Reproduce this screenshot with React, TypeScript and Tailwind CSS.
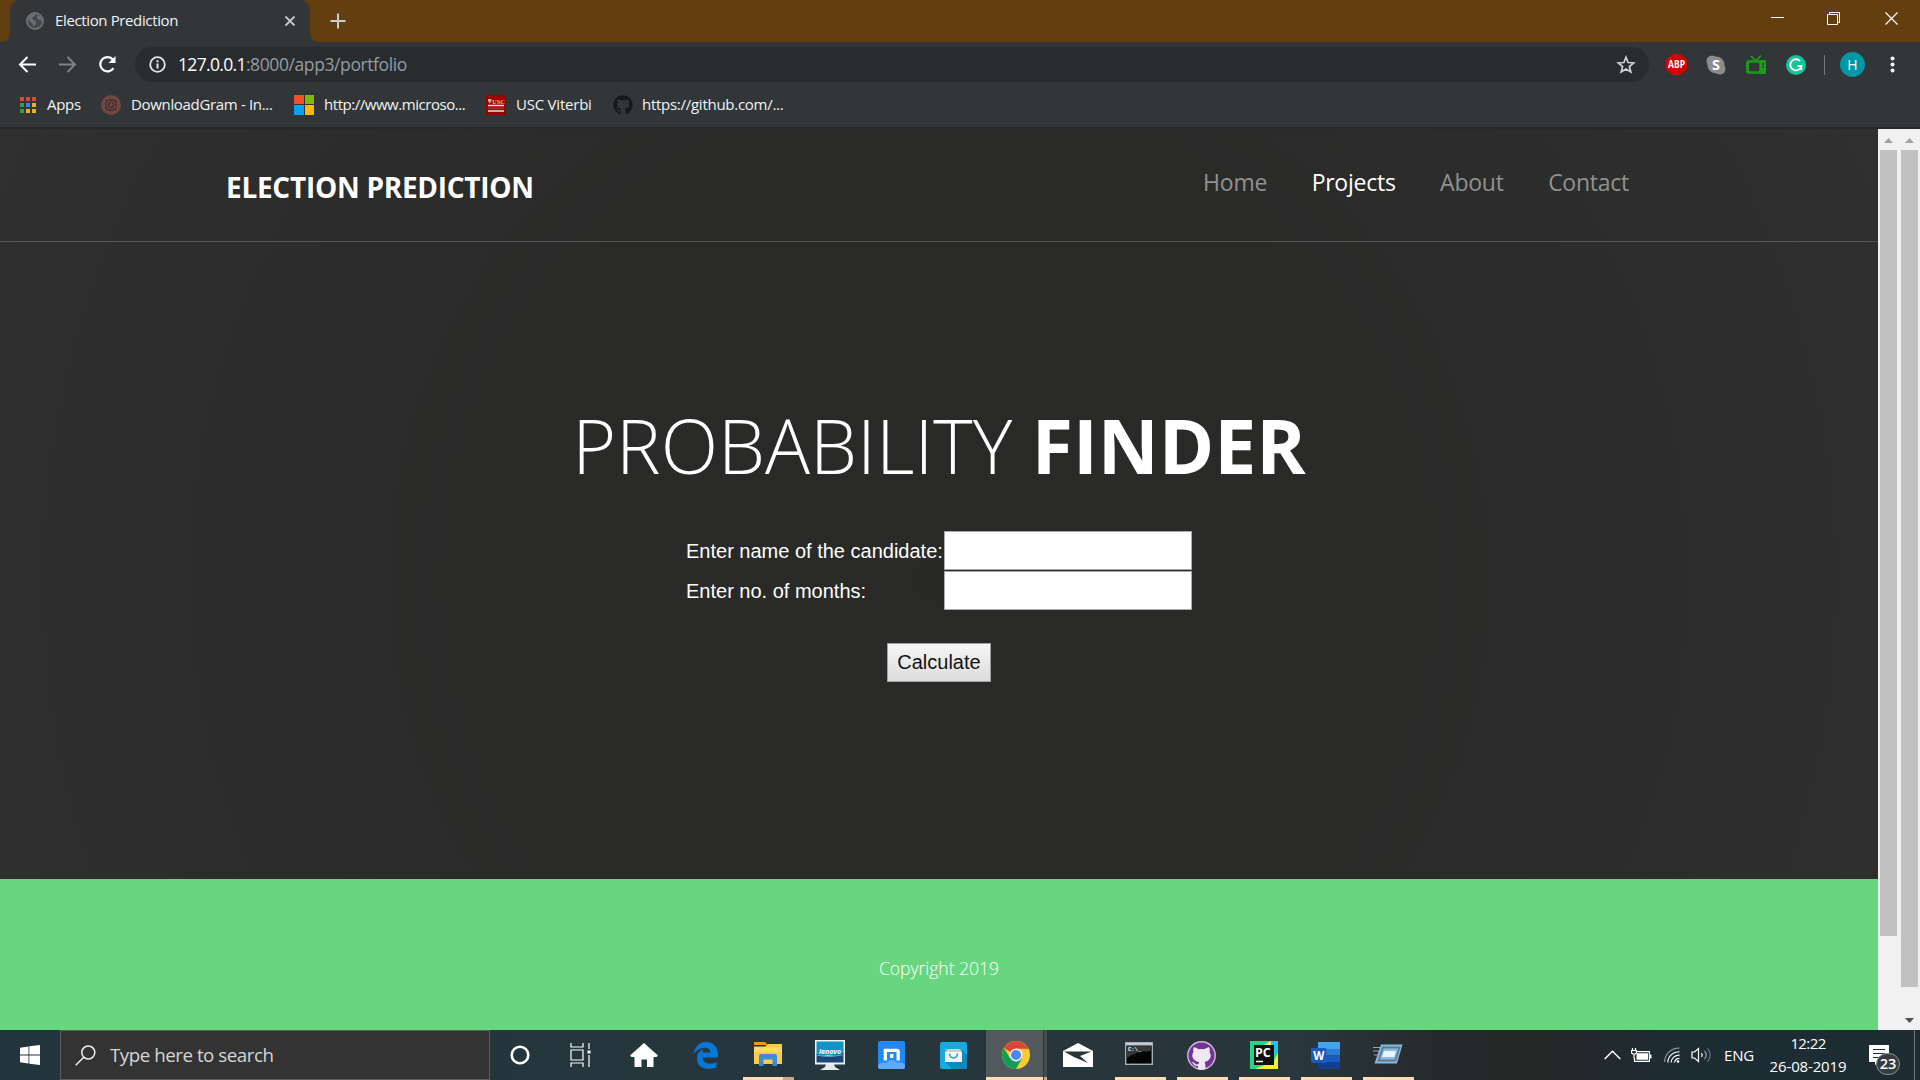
import React from "react";
import { FaGithub } from "react-icons/fa";

const TabBar = () => (
  <div className="flex h-[42px] bg-[#633f10]">
    <svg width="10" height="42" className="self-end"><path d="M0 42 Q10 42 10 32 V42 Z" fill="#323639" /></svg>
    <div className="flex h-[42px] w-[300px] items-center rounded-t-[10px] bg-[#323639] pr-[14px] pl-[16px]">
      <svg width="18" height="18" viewBox="0 0 18 18">
        <circle cx="9" cy="9" r="8" fill="#44484c" stroke="#6b6f73" strokeWidth="2" />
        <path d="M2 5 Q5 2 10 2 Q9 5 6 5 L7 8 L10 9 Q10 12 8 15 Q7 12 6 11 Q3 10 2 5Z M11 3 L15 5 L16 9 L13 8 L11 6Z" fill="#6b6f73" />
      </svg>
      <span className="mb-[2px] ml-[11px] text-[15px] leading-5 tracking-[-0.37px] whitespace-nowrap text-[#f1f3f4]">Election Prediction</span>
      <svg className="ml-auto" width="12" height="12" viewBox="0 0 12 12"><path d="M1.5 1.5 L10.5 10.5 M10.5 1.5 L1.5 10.5" stroke="#c4c7c9" strokeWidth="1.8" /></svg>
    </div>
    <svg width="10" height="42"><path d="M0 32 Q0 42 10 42 H0 Z" fill="#323639" /></svg>
    <svg className="mt-[13px] ml-[9.5px]" width="16" height="16" viewBox="0 0 16 16"><path d="M8 .5 V15.5 M.5 8 H15.5" stroke="#cbcdd0" strokeWidth="2" /></svg>
    <div className="mt-[11px] mr-[22px] ml-auto flex">
      <svg width="13" height="15" viewBox="0 0 13 15"><path d="M0 6.5 H13" stroke="#fff" /></svg>
      <svg className="ml-[43px]" width="13" height="15" viewBox="0 0 13 15" fill="none" stroke="#fff"><path d="M.5 3.500 H10.500 V13.500 H.5Z M2.500 3.500 V1.500 H12.500 V11.500 H10.500" /></svg>
      <svg className="ml-[45px]" width="13" height="15" viewBox="0 0 13 15"><path d="M.5 1.500 L12.500 13.500 M12.500 1.500 L.5 13.500" stroke="#fff" strokeWidth="1.200" /></svg>
    </div>
  </div>
);

const AddressBar = () => (
  <div className="flex h-[45px] items-center bg-[#323639]">
    <svg className="ml-[18px]" width="19" height="19" viewBox="0 0 19 19" fill="none" stroke="#fff" strokeWidth="2"><path d="M18 9.500 H2.500 M9.500 2 L2 9.500 L9.500 17" /></svg>
    <svg className="ml-[22px]" width="18" height="19" viewBox="0 0 18 19" fill="none" stroke="#7f8386" strokeWidth="2"><path d="M0 9.500 H16 M8.500 2 L16 9.500 L8.500 17" /></svg>
    <svg className="ml-[21px]" width="19" height="19" viewBox="0 0 19 19"><path d="M15.500 13.200 A7.200 7.200 0 1 1 14.600 4.200" fill="none" stroke="#fff" strokeWidth="2.200" /><path d="M17.500 1 V8 H10.500Z" fill="#fff" /></svg>
    <div className="ml-[18px] flex h-[35px] w-[1514px] items-center rounded-full bg-[#282c2f] pl-[14px]">
      <svg width="17" height="17" viewBox="0 0 17 17"><circle cx="8.500" cy="8.500" r="7.300" fill="none" stroke="#e3e5e7" strokeWidth="1.800" /><path d="M7.500 7.500 H9.500 V12.500 H7.500Z M7.500 4.300 H9.500 V6.200 H7.500Z" fill="#e3e5e7" /></svg>
      <div className="mb-px ml-[12px] flex text-[17.5px] leading-6 whitespace-nowrap">
        <span className="tracking-[-0.66px] text-white">127.0.0.1</span>
        <span className="tracking-[-0.4px] text-[#969ba0]">:8000/app3/portfolio</span>
      </div>
      <svg className="mr-[13px] ml-auto" width="20" height="20" viewBox="0 0 20 20"><path d="M10 2.200 L12.100 7.500 L17.700 7.900 L13.400 11.500 L14.800 17 L10 14 L5.200 17 L6.600 11.500 L2.300 7.900 L7.900 7.500Z" fill="none" stroke="#ced0d3" strokeWidth="1.700" /></svg>
    </div>
    <svg className="ml-[17px]" width="21" height="21" viewBox="0 0 21 21"><path d="M6 0 H15 L21 6 V15 L15 21 H6 L0 15 V6Z" fill="#cf0404" /><text x="10.500" y="14.300" textAnchor="middle" fontSize="10.500" fontWeight="700" fill="#fff" textLength="17" lengthAdjust="spacingAndGlyphs">ABP</text></svg>
    <svg className="ml-[19px]" width="20" height="20" viewBox="0 0 20 20"><circle cx="6" cy="6" r="5.500" fill="#8c8c8c" /><circle cx="14" cy="14" r="5.500" fill="#8c8c8c" /><circle cx="10" cy="10" r="8.500" fill="#8c8c8c" /><text x="10" y="15" textAnchor="middle" fontSize="14.500" fontWeight="700" fill="#fff">S</text></svg>
    <svg className="ml-[20px]" width="20" height="20" viewBox="0 0 20 20" fill="none" stroke="#1aa01a" strokeWidth="1.700"><path d="M5 1 L10 6 L15 .5" /><rect x="1" y="6" width="18" height="12" rx="1.500" /><path d="M15 6 V18 H19 V6Z" fill="#1aa01a" /><rect x="2.200" y="7" width="12" height="10" rx="2" /><path d="M16 9 H18 M16 12 H18" stroke="#323639" /></svg>
    <svg className="ml-[20px]" width="20" height="20" viewBox="0 0 20 20"><circle cx="10" cy="10" r="10" fill="#15c39a" /><path d="M14 6 A5.600 5.600 0 1 0 15.400 11 H11.500 M15.300 10.500 V15" fill="none" stroke="#fff" strokeWidth="1.800" /></svg>
    <div className="ml-[18px] h-5 w-px bg-[#73777a]" />
    <div className="ml-[15px] flex h-[25px] w-[25px] items-center justify-center rounded-full bg-[#0097a7] text-[14px] leading-none text-white">H</div>
    <svg className="ml-[25px]" width="5" height="17" viewBox="0 0 5 17" fill="#fff"><circle cx="2.500" cy="2.500" r="2" /><circle cx="2.500" cy="8.500" r="2" /><circle cx="2.500" cy="14.500" r="2" /></svg>
  </div>
);

const dots = ["#e8403a", "#e8403a", "#e8403a", "#2e9e50", "#2f86f0", "#f2b01e", "#2e9e50", "#f2b01e", "#f2b01e"];

const Bookmarks = () => (
  <div className="flex h-[42px] items-center border-b-2 border-[#26292b] bg-[#323639] pb-[5px] text-[15px] leading-5 whitespace-nowrap text-[#f1f3f4]">
    <div className="ml-[20px] grid grid-cols-[4px_4px_4px] gap-[2px]">
      {dots.map((c, i) => <i key={i} className="h-1 w-1" style={{ background: c }} />)}
    </div>
    <span className="mb-px ml-[11px] w-[34px] tracking-[-0.3px]">Apps</span>
    <svg className="ml-[20px]" width="20" height="20" viewBox="0 0 20 20" fill="none" stroke="#3c312f" strokeWidth="1.300"><circle cx="10" cy="10" r="10" fill="#71483f" stroke="none" /><rect x="5" y="5" width="10" height="10" rx="3" /><circle cx="10" cy="10" r="2.600" /></svg>
    <span className="mb-px ml-[10px] w-[143px] tracking-[-0.33px]">DownloadGram - In...</span>
    <div className="ml-[20px] grid grid-cols-2 gap-px">
      <i className="h-[9.5px] w-[9.5px] bg-[#f25022]" /><i className="h-[9.5px] w-[9.5px] bg-[#7fba00]" />
      <i className="h-[9.5px] w-[9.5px] bg-[#00a4ef]" /><i className="h-[9.5px] w-[9.5px] bg-[#ffb900]" />
    </div>
    <span className="mb-px ml-[10px] w-[142px] tracking-[-0.46px]">http://www.microso...</span>
    <svg className="ml-[20px]" width="20" height="20" viewBox="0 0 20 20"><path d="M0 0H20V20H0Z" fill="#990000" /><path d="M2 10.500H18M2 16H18" stroke="#f3dada" strokeWidth="1.500" /><path d="M2 13.200H18" stroke="#c56565" strokeWidth=".7" /><path d="M2 4H5.500V6L3.700 8.500L2 6Z" fill="#d9a0a0" /><text x="6" y="8.500" fontSize="6.500" fontWeight="700" fill="#ffc72c" fontFamily="Liberation Serif">USC</text></svg>
    <span className="mb-px ml-[10px] w-[76px] tracking-[-0.22px]">USC Viterbi</span>
    <FaGithub className="ml-[21px]" size={20} color="#191717" />
    <span className="mb-px ml-[9px] tracking-[-0.27px]">https://github.com/...</span>
  </div>
);

const UpArrow = () => <svg width="9" height="5" viewBox="0 0 9 5"><path d="M0 5 L4.500 0 L9 5Z" fill="#a3a3a3" /></svg>;

const Scrollbars = () => (
  <div className="flex h-full w-[42px] bg-[#f1f1f1]">
    <div className="flex w-[21px] flex-col items-center">
      <div className="flex h-[21px] items-center pt-[2px]"><UpArrow /></div>
      <div className="h-[786px] w-[17px] bg-[#c1c1c1]" />
    </div>
    <div className="flex w-[21px] flex-col items-center">
      <div className="flex h-[21px] items-center pt-[2px]"><UpArrow /></div>
      <div className="h-[837px] w-[17px] bg-[#c1c1c1]" />
      <svg className="mt-auto mb-[7px]" width="9" height="5" viewBox="0 0 9 5"><path d="M0 0 L4.500 5 L9 0Z" fill="#505050" /></svg>
    </div>
  </div>
);

const Page = () => (
  <div className="flex h-[901px]">
    <main className="flex flex-1 flex-col text-white">
      <div className="h-[750px] bg-[radial-gradient(circle_at_50%_60%,#292928_0%,#2a2a29_45%,#2d2d2d_80%,#303030_100%)]">
        <header className="flex h-[113px] items-start border-b border-[#565656]">
          <h1 className="mt-[38px] ml-[226px] text-[28px] leading-10 font-bold tracking-[-0.27px]">ELECTION PREDICTION</h1>
          <nav className="mt-[33px] mr-[249px] ml-auto flex gap-[44.5px] text-[23px] leading-10 tracking-[-0.25px] text-[#919191]">
            <a>Home</a><a className="text-white">Projects</a><a>About</a><a>Contact</a>
          </nav>
        </header>
        <section className="flex flex-col items-center">
          <h2 className="mt-[149px] text-[75px] leading-[108px] font-light whitespace-nowrap">PROBABILITY <b className="font-bold">FINDER</b></h2>
          <form className="mt-[32px] flex flex-col items-center font-['Liberation_Sans',sans-serif] text-[20px]">
            <div className="grid grid-cols-[258px_248px] items-center gap-y-px">
              <label>Enter name of the candidate:</label><input className="h-[39px] border border-[#a9a9a9] bg-white" />
              <label>Enter no. of months:</label><input className="h-[39px] border border-[#a9a9a9] bg-white" />
            </div>
            <button type="button" className="mt-[33px] h-[39px] w-[104px] border border-[#a0a0a0] bg-gradient-to-b from-[#f6f6f6] to-[#dcdcdc] pb-[2px] text-[#111]">Calculate</button>
          </form>
        </section>
      </div>
      <footer className="flex flex-1 items-center justify-center bg-[#68d67f] pt-[26px] text-[17.5px] leading-6 font-light">Copyright 2019</footer>
    </main>
    <Scrollbars />
  </div>
);

const Cell = ({ children, line }: { children: React.ReactNode; line?: boolean }) => (
  <div className="flex h-[50px] w-[62px] flex-col items-center">
    <div className="flex h-[47px] items-center pt-[3px]">{children}</div>
    {line && <div className="h-[3px] w-[51px] bg-[#ffdcb5]" />}
  </div>
);

const Taskbar = () => (
  <div className="flex h-[50px] items-center bg-[linear-gradient(90deg,#22343c_0%,#26363d_45%,#29363b_68%,#26292a_75%,#252727_80%,#1e2c33_87%,#1d2c33_100%)] text-white">
    <div className="flex w-[60px] justify-center">
      <svg width="20" height="20" viewBox="0 0 20 20" fill="#fff"><path d="M0 2.800 L8.500 1.500 V9.600 H0Z M9.300 1.300 L20 0 V9.600 H9.300Z M0 10.400 H8.500 V18.500 L0 17.200Z M9.300 10.400 H20 V20 L9.300 18.700Z" /></svg>
    </div>
    <div className="flex h-[50px] w-[430px] items-center border border-[#5a5c5d] bg-[#333333] pl-[14px]">
      <svg width="21" height="21" viewBox="0 0 21 21" fill="none" stroke="#f0f0f0" strokeWidth="1.500"><circle cx="13.300" cy="7.500" r="6.500" /><path d="M8.700 12.200 L.7 20.200" /></svg>
      <span className="ml-[14px] text-[18.75px] leading-6 tracking-[-0.48px] text-[#d6d6d6]">Type here to search</span>
    </div>
    <div className="-ml-px flex">
      <Cell><svg width="20" height="24" viewBox="0 0 20 24"><circle cx="10" cy="12" r="8.300" fill="none" stroke="#fff" strokeWidth="2.600" /></svg></Cell>
      <Cell><svg className="-ml-[4px]" width="21" height="24" viewBox="0 0 21 24" fill="none" stroke="#fff" strokeWidth="1.200"><path d="M1 0 V4 H13 V0 M1 7 H13 V17 H1Z M1 24 V20 H13 V24 M19 0 V6 M19 12 V24" /><path d="M17.500 7.500 H20.500 V10.500 H17.500Z" fill="#fff" stroke="none" /></svg></Cell>
      <Cell><svg width="28" height="24" viewBox="0 0 28 24"><path d="M14 0 L28 12.500 L26.500 14 H23.500 V24 H17 V16.500 H11.500 V24 H4.500 V14 H1.500 L0 12.500Z" fill="#fff" /></svg></Cell>
      <Cell><svg width="26" height="27" viewBox="0 0 26 27"><path d="M.5 12 C1.500 4.500 7 0 13.200 0 C20.500 0 25 5 25 12 V15.500 H9.500 C9.700 19.500 13 21.600 17 21.600 C19.700 21.600 22 20.900 23.500 20 V25.300 C21.500 26.400 18.500 27 15.700 27 C9 27 4 23 4 16.500 C4 12 6.300 8.800 10 6.900 C9.700 8 9.400 9.600 9.400 10.600 H17.300 C17.300 7.200 15.500 5.700 12.500 5.700 C7.500 5.700 3 8.600 .5 12Z" fill="#0878d7" /></svg></Cell>
      <div className="flex h-[50px] w-[62px] flex-col items-center">
        <div className="flex h-[47px] items-center"><svg width="28" height="24" viewBox="0 0 28 24"><path d="M0 0 H11 L14 3 H0Z" fill="#e3a008" /><path d="M0 4.500 H11 L14 2 H28 V22 H0Z" fill="#fccb4a" /><path d="M0 5 H28 V10 H0Z" fill="#ffd96e" /><path d="M5 24 V14 Q5 12 7 12 H21 Q23 12 23 14 V24 H18.500 V17.500 H9.500 V24Z" fill="#3a8cd8" /></svg></div>
        <div className="flex"><i className="h-[3px] w-[40px] bg-[#ffdcb5]" /><i className="h-[3px] w-[11px] bg-[#c8a98b]" /></div>
      </div>
      <Cell><svg width="30" height="30" viewBox="0 0 30 30"><path d="M11 24 H19 L20 27 L25 30 H5 L10 27Z" fill="#e4e9ec" /><path d="M0 0 H30 V24.500 H0Z" fill="#eef3f6" /><path d="M1.500 1.500 H28.500 V15 H1.500Z" fill="#0f94c8" /><path d="M1.500 14 Q15 18 28.500 13 V22.500 H1.500Z" fill="#1c4777" /><path d="M1.500 15 Q15 18 28.500 14.500" fill="none" stroke="#7cc4e4" strokeWidth=".8" /><text x="15" y="13.500" textAnchor="middle" fontSize="7" fontWeight="700" fontStyle="italic" fill="#fff">lenovo</text></svg></Cell>
      <Cell><svg width="28" height="28" viewBox="0 0 28 28"><rect width="27" height="28" rx="2" fill="#2188f5" /><path d="M0 24 Q4 20 8 22 Q14 16 20 22 Q24 20 27 24 V26 Q27 28 25 28 H2 Q0 28 0 26Z" fill="#5faaf8" /><path d="M7.300 19.500 V9.300 H18.500 Q20.200 9.300 20.200 11 V19.500 M13.700 13 V17" fill="none" stroke="#fff" strokeWidth="3.300" /></svg></Cell>
      <Cell><svg className="-ml-px" width="27" height="27" viewBox="0 0 27 27"><rect width="27" height="27" rx="2" fill="#1aa8e0" /><path d="M22 8 L27 13 V25 Q27 27 25 27 H12 L5 20Z" fill="#1488bd" /><path d="M7 7 H20 L22 10 H5Z" fill="#c9ced1" /><path d="M5 10 H22 V20 H5Z" fill="#f2f4f5" /><path d="M9.500 11.500 Q10 16 13.500 16 Q17 16 17.500 11.500" fill="none" stroke="#18a5dc" strokeWidth="1.500" /></svg></Cell>
      <div className="flex h-[50px] w-[62px]">
        <div className="ml-px flex w-[57px] flex-col items-center bg-[#52595d]">
          <div className="flex h-[47px] items-center pt-[3px] pl-[3px]"><svg width="28" height="28" viewBox="0 0 28 28"><circle cx="14" cy="14" r="14" fill="#fbc934" /><path d="M14 14 L1.900 7 A14 14 0 0 1 26.100 7 L26.500 7.800 H14Z" fill="#db4437" /><path d="M1.900 7 A14 14 0 0 0 14 28 L20 17.500 L14 14 L8 17.200Z" fill="#109d58" /><circle cx="14" cy="14" r="6.500" fill="#f1f1f1" /><circle cx="14" cy="14" r="5" fill="#4a86f4" /></svg></div>
          <div className="h-[3px] w-full bg-[#ffdcb5]" />
        </div>
        <div className="flex w-[4px] flex-col border-l border-[#2f3638] bg-[#464a4b]"><i className="mt-auto h-[3px] bg-[#c8a98b]" /></div>
      </div>
      <Cell><svg width="30" height="24" viewBox="0 0 30 24"><path d="M0 8 L15 0 L30 8 V24 H0Z" fill="#fff" /><path d="M1 8.500 H28.500 L17 13 L25 20 L11 14Z" fill="#26353c" /></svg></Cell>
      <Cell line><svg className="-mt-[3px] -ml-[2px]" width="28" height="23" viewBox="0 0 28 23"><rect x=".7" y=".7" width="26.600" height="21.600" fill="#050505" stroke="#a9aeb1" strokeWidth="1.400" /><path d="M1 1 H27 V3.500 H1Z" fill="#c3cad0" /><path d="M1.500 4 H26.500 V9 Q8 9 1.500 17Z" fill="#35383a" /><text x="3" y="9" fontSize="5.500" fontWeight="700" fill="#fff" fontFamily="Liberation Mono">C:\_</text></svg></Cell>
      <Cell line><svg className="-ml-px" width="29" height="29" viewBox="0 0 29 29"><circle cx="14.500" cy="14.500" r="13.700" fill="#74329a" stroke="#cdbcd6" strokeWidth="1.400" /><path d="M7 6 L12 8.300 Q14.500 7.700 17 8.300 L22 6 Q23.300 9 22.500 11 Q25 15 22.500 18 Q21 20.500 17.500 21 Q18.500 22 18.500 28 Q14.500 29.500 11 28 V25 Q7.500 25.500 6 22.500 L4.500 21 Q6.500 20.500 8 22.500 Q9.500 24 11.500 23 L12 21 Q8 20.500 6.500 18 Q4 14.500 6.500 11 Q5.700 9 7 6Z" fill="#eee9f1" /></svg></Cell>
      <Cell line><svg width="28" height="28" viewBox="0 0 28 28"><path d="M0 0 H28 V28 H0Z" fill="#21d789" /><path d="M14 4 L20 0 H28 V14Z" fill="#18c7e8" /><path d="M14 4 L21 0 V4Z M28 12 V28 H5 L24 20Z" fill="#f5ef3c" /><path d="M4 4 H24 V24 H4Z" fill="#101010" /><path d="M6 20.500 H13" stroke="#fff" strokeWidth="1.500" /><text x="5" y="15.500" fontSize="12.500" fontWeight="700" fill="#fff">PC</text></svg></Cell>
      <Cell line><svg className="-ml-px" width="29" height="27" viewBox="0 0 29 27"><path d="M7 0 H29 V7 H7Z" fill="#41a5ee" /><path d="M7 7 H29 V13.500 H7Z" fill="#2b7cd3" /><path d="M7 13.500 H29 V20 H7Z" fill="#185abd" /><path d="M7 20 H29 V27 H7Z" fill="#103f91" /><rect y="6" width="15.500" height="15" rx="1" fill="#185abd" /><text x="7.700" y="17.800" textAnchor="middle" fontSize="11.500" fontWeight="700" fill="#fff">W</text></svg></Cell>
      <Cell line><svg className="-mt-[3px]" width="30" height="20" viewBox="0 0 30 20"><path d="M0 3.500 H8 M0 7 H6 M1 11 H6" stroke="#7fa9c9" strokeWidth="1.200" /><path d="M8 .5 H29.500 L24 19.500 H1.500Z" fill="#84bce3" /><path d="M10 3.500 H26.500 L22.500 16.500 H5.500Z" fill="none" stroke="#647889" strokeWidth="1.800" /><path d="M11 7 H23 L21 13 H9Z" fill="#eaf4fc" /></svg></Cell>
    </div>
    <div className="ml-auto flex h-[50px] items-center">
      <svg width="17" height="10" viewBox="0 0 17 10" fill="none" stroke="#fff" strokeWidth="1.500"><path d="M.7 9 L8.500 1.200 L16.300 9" /></svg>
      <svg className="ml-[10px]" width="21" height="15" viewBox="0 0 21 15" fill="none" stroke="#fff" strokeWidth="1.200"><path d="M5 3.600 H18.400 V13.400 H3.500 V10" /><path d="M5.500 5.300 H17 V11.800 H5.500Z M19 6.500 H20.500 V10.500 H19Z" fill="#fff" stroke="none" /><path d="M1.500 0 V2.500 M4.500 0 V2.500 M.6 2.500 H5.400 V5 Q3 7.500 .6 5Z M3 6 V10.500" /></svg>
      <svg className="ml-[12px]" width="16" height="16" viewBox="0 0 16 16" fill="none" stroke="#fff" strokeWidth="1.200"><path d="M.6 15 A14 14 0 0 1 15.500 1.200" stroke="#8b9498" /><path d="M3.800 15.500 A11 11 0 0 1 15.500 4.800 M7 15.500 A8 8 0 0 1 15.500 8.200 M10.500 15.500 A5 5 0 0 1 15.500 11.300" /><circle cx="14" cy="14.500" r="1.300" fill="#fff" stroke="none" /></svg>
      <svg className="ml-[11px]" width="22" height="18" viewBox="0 0 22 18" fill="none" stroke="#fff" strokeWidth="1.200"><path d="M1 6 H3.500 L7.500 2.500 V15.500 L3.500 12 H1Z M10.500 7 Q12 9 10.500 11" /><path d="M13.500 5 Q17 9 13.500 13" stroke="#9aa1a5" /><path d="M16.500 2.500 Q22 9 16.500 15.500" stroke="#68737a" /></svg>
      <span className="ml-[11px] w-[30px] text-[15px] leading-5 tracking-[-0.2px]">ENG</span>
      <div className="ml-[15px] flex w-[78px] flex-col items-center text-[15px] leading-[23px]">
        <span className="tracking-[-0.6px]">12:22</span><span className="tracking-[-0.15px] whitespace-nowrap">26-08-2019</span>
      </div>
      <div className="relative ml-[22px] h-[32px] w-[33px]">
        <svg className="mt-[6px]" width="20" height="20" viewBox="0 0 20 20"><path d="M0 0 H20 V17 H10 L6 20 V17 H0Z" fill="#fff" /><path d="M4 4.500 H16 M4 8.500 H16 M4 12.500 H12" stroke="#1e2c33" strokeWidth="1.200" /></svg>
        <span className="absolute top-[14px] left-[7px] flex h-[22px] w-[24px] items-center justify-center rounded-full border border-[#898f92] bg-[#363c3f] text-[14.5px] leading-none font-semibold">23</span>
      </div>
      <div className="ml-[12px] h-[50px] w-px bg-[#71797d]" />
      <div className="w-[5px]" />
    </div>
  </div>
);

export default function App() {
  return (
    <div className="flex h-[1080px] w-[1920px] flex-col overflow-hidden font-['Open_Sans',sans-serif]">
      <TabBar />
      <AddressBar />
      <Bookmarks />
      <Page />
      <Taskbar />
    </div>
  );
}
